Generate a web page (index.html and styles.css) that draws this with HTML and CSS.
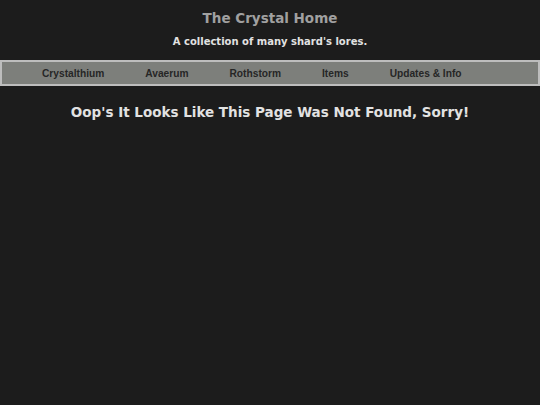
FILE: index.html
```html
<!DOCTYPE html>
<html>
<head>
<meta charset="utf-8">
<link rel="stylesheet" href="styles.css">
</head>
<body>
<header class="site-header">
  <h1 class="site-title">The Crystal Home</h1>
  <p class="site-tagline">A collection of many shard's lores.</p>
</header>
<nav class="main-nav">
  <a class="nav-link" href="#">Crystalthium</a>
  <a class="nav-link" href="#">Avaerum</a>
  <a class="nav-link" href="#">Rothstorm</a>
  <a class="nav-link" href="#">Items</a>
  <a class="nav-link" href="#">Updates &amp; Info</a>
</nav>
<main class="content">
  <h2 class="not-found">Oop's It Looks Like This Page Was Not Found, Sorry!</h2>
</main>
</body>
</html>
```
FILE: styles.css
```css
html, body {
  margin: 0;
  padding: 0;
  background: #1c1c1c;
  height: 100%;
}
body {
  font-family: "DejaVu Sans", Verdana, sans-serif;
}
.site-header {
  text-align: center;
  padding-top: 10px;
}
.site-title {
  margin: 0;
  font-size: 13.5px;
  font-weight: bold;
  color: #a0a0a0;
  line-height: 17px;
}
.site-tagline {
  margin: 8px 0 0;
  font-size: 10px;
  font-weight: bold;
  color: #e2e2e2;
  line-height: 14px;
}
.main-nav {
  margin-top: 11px;
  display: flex;
  gap: 41px;
  padding: 0 0 0 40px;
  height: 22px;
  align-items: center;
  background: #7d7f7b;
  border: 2px solid #bdbdbd;
}
.nav-link {
  font-family: "Liberation Sans", Arial, sans-serif;
  font-size: 10.2px;
  font-weight: bold;
  color: #262626;
  text-decoration: none;
}
.content {
  text-align: center;
}
.not-found {
  margin: 17px 0 0;
  font-size: 13.5px;
  font-weight: bold;
  color: #e2e2e2;
  line-height: 18px;
}
```
